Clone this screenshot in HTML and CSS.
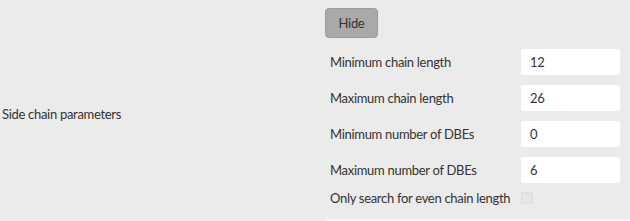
FILE: index.html
```html
<!DOCTYPE html>
<html lang="en">
<head>
    <meta charset="UTF-8">
    <title>Side chain parameters</title>
    <link rel="stylesheet" href="styles.css">
</head>
<body>
    <div class="section">
        <div class="section-title">Side chain parameters</div>
        <div class="section-body">
            <button class="hide-btn">Hide</button>
            <div class="field">
                <label>Minimum chain length</label>
                <input type="text" value="12">
            </div>
            <div class="field">
                <label>Maximum chain length</label>
                <input type="text" value="26">
            </div>
            <div class="field">
                <label>Minimum number of DBEs</label>
                <input type="text" value="0">
            </div>
            <div class="field">
                <label>Maximum number of DBEs</label>
                <input type="text" value="6">
            </div>
            <div class="field check">
                <label>Only search for even chain length</label>
                <span class="checkbox"></span>
            </div>
            <div class="next"></div>
        </div>
    </div>
</body>
</html>
```

FILE: styles.css
```css
body {
    font-family: Lato, Arial, sans-serif;
    font-size: 13px;
    letter-spacing: -0.3px;
    background-color: #ebebeb;
    color: #333333;
    margin: 0;
    padding: 0;
}
.section {
    display: grid;
    grid-template-columns: 325px 1fr;
    height: 221px;
}
.section-title {
    align-self: center;
    padding-left: 2px;
    padding-top: 6px;
}
.section-body {
    display: flex;
    flex-direction: column;
    padding-top: 8px;
}
.hide-btn {
    align-self: flex-start;
    width: 53px;
    height: 30px;
    margin-bottom: 11px;
    background-color: #a9a9a9;
    border: 1px solid #9c9c9c;
    border-radius: 4px;
    color: #333333;
    font-family: inherit;
    font-size: 13px;
    letter-spacing: inherit;
}
.field {
    display: flex;
    align-items: center;
    height: 26px;
    margin-bottom: 10px;
}
.field label {
    flex-shrink: 0;
    width: 191px;
    padding-left: 5px;
    white-space: nowrap;
}
.field input {
    box-sizing: border-box;
    width: 99px;
    height: 26px;
    padding: 0 9px;
    border: none;
    border-radius: 3px;
    background-color: #ffffff;
    color: #333333;
    font-family: inherit;
    font-size: 13px;
    letter-spacing: inherit;
}
.field.check {
    height: 16px;
    margin-top: -3px;
}
.checkbox {
    box-sizing: border-box;
    width: 12px;
    height: 12px;
    border: 1px solid #dddddd;
    border-radius: 2px;
    background-color: #e6e6e6;
}
.next {
    margin-top: auto;
    height: 2px;
    background-color: #f6f6f6;
}
```
